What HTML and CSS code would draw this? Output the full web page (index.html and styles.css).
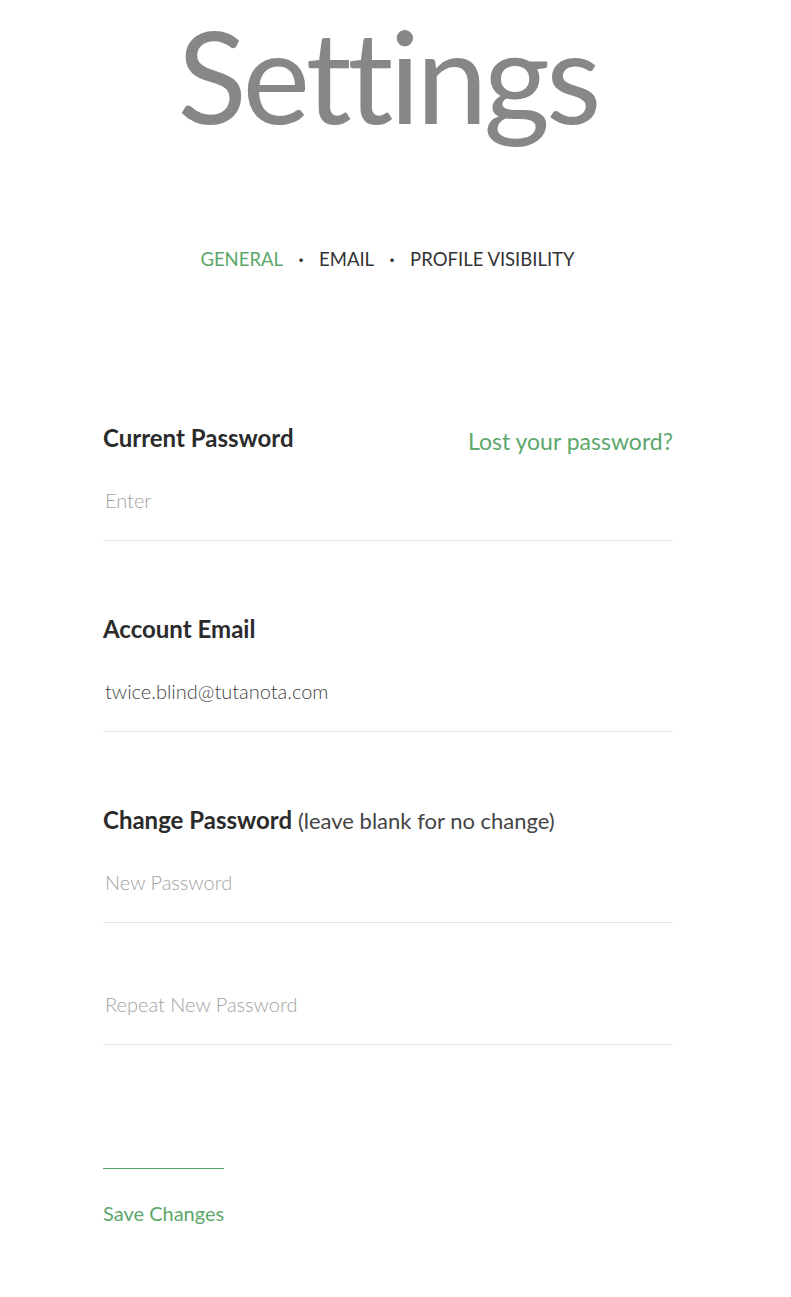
FILE: index.html
```html
<!DOCTYPE html>
<html lang="en">
<head>
<meta charset="utf-8">
<title>Settings</title>
<link rel="stylesheet" href="styles.css">
</head>
<body>
<main class="page">
  <h1 class="title">Settings</h1>
  <nav class="tabs">
    <a class="tab tab-active" href="#">GENERAL</a>
    <span class="sep">·</span>
    <a class="tab" href="#">EMAIL</a>
    <span class="sep">·</span>
    <a class="tab" href="#">PROFILE VISIBILITY</a>
  </nav>
  <form class="form">
    <div class="field">
      <div class="field-head">
        <label class="label">Current Password</label>
        <a class="lost" href="#">Lost your password?</a>
      </div>
      <input class="input" type="password" placeholder="Enter">
    </div>
    <div class="field">
      <div class="field-head">
        <label class="label">Account Email</label>
      </div>
      <input class="input" type="text" value="twice.blind@tutanota.com">
    </div>
    <div class="field">
      <div class="field-head">
        <label class="label">Change Password <span class="hint">(leave blank for no change)</span></label>
      </div>
      <input class="input" type="password" placeholder="New Password">
      <input class="input input-repeat" type="password" placeholder="Repeat New Password">
    </div>
    <div class="actions">
      <button class="save" type="button">Save Changes</button>
    </div>
  </form>
</main>
</body>
</html>
```
FILE: styles.css
```css
* { box-sizing: border-box; }
html, body { margin: 0; padding: 0; background: #fff; }
body { font-family: "Lato", "Liberation Sans", sans-serif; color: #333; }

.page { display: flex; flex-direction: column; align-items: center; }

.title {
  margin: 0;
  padding-right: 16px;
  font-size: 128px;
  line-height: 150px;
  height: 150px;
  letter-spacing: -4px;
  font-weight: 400;
  font-variant-ligatures: none;
  color: #878787;
  text-align: center;
}

.tabs {
  margin-top: 91px;
  margin-left: -16px;
  display: flex;
  align-items: baseline;
  gap: 15px;
  font-size: 18.5px;
  line-height: 36px;
}
.tab { color: #333; text-decoration: none; }
.tab-active { color: #5ca76c; }
.sep { color: #333; font-weight: 700; width: 6px; text-align: center; }

.form {
  width: 570px;
  margin-left: -15px;
  margin-top: 146px;
  display: flex;
  flex-direction: column;
}

.field { display: flex; flex-direction: column; margin-bottom: 73px; }

.field-head {
  display: flex;
  justify-content: space-between;
  align-items: flex-start;
  height: 30px;
  line-height: 30px;
}
.label { font-size: 24px; font-weight: 700; color: #2b2b2b; }
.hint { font-size: 22px; font-weight: 400; color: #444; }
.lost { font-size: 23px; color: #5ca76c; text-decoration: none; margin-top: 3px; }

.input {
  border: 0;
  border-bottom: 1px solid #e4e4e4;
  outline: none;
  padding: 7px 2px 0;
  height: 88px;
  font-family: inherit;
  font-size: 20px;
  font-weight: 300;
  color: #444;
  background: transparent;
}
.input::placeholder { color: #a2a2a2; opacity: 1; }
.input-repeat { margin-top: 34px; }

.actions { margin-top: 50px; display: flex; }
.save {
  appearance: none;
  display: flex;
  flex-direction: column;
  gap: 32px;
  background: none;
  border: 0;
  padding: 0;
  font-family: inherit;
  font-size: 20px;
  line-height: 24px;
  color: #5ca76c;
  cursor: pointer;
}
.save::before {
  content: "";
  display: block;
  align-self: stretch;
  height: 1px;
  background: #5ca76c;
}
```
